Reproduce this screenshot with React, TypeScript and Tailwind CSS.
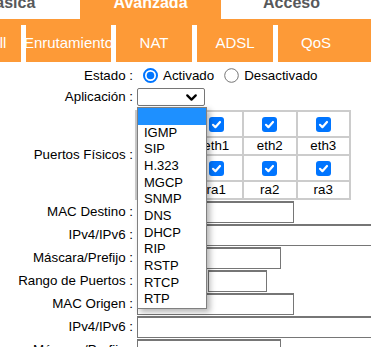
import React from 'react';
import { ChevronDown } from 'lucide-react';

const topTabs = [
  { title: 'Básica', active: false },
  { title: 'Avanzada', active: true },
  { title: 'Acceso', active: false },
];

const subTabs = [
  { title: 'Firewall', width: 'w-[81px]' },
  { title: 'Enrutamiento', width: 'w-[90px]' },
  { title: 'NAT', width: 'w-[81px]' },
  { title: 'ADSL', width: 'w-[81px]' },
  { title: 'QoS', width: 'w-[81px]' },
];

const apps = ['', 'IGMP', 'SIP', 'H.323', 'MGCP', 'SNMP', 'DNS', 'DHCP', 'RIP', 'RSTP', 'RTCP', 'RTP'];

const Radio: React.FC<{ checked?: boolean }> = ({ checked }) => (
  <svg width="15" height="15" viewBox="0 0 15 15" className="shrink-0">
    {checked ? (
      <>
        <circle cx="7.5" cy="7.5" r="6.5" fill="white" stroke="#0075ff" strokeWidth="2" />
        <circle cx="7.5" cy="7.5" r="3.8" fill="#0075ff" />
      </>
    ) : (
      <circle cx="7.5" cy="7.5" r="6.8" fill="white" stroke="#767676" strokeWidth="1" />
    )}
  </svg>
);

const Check: React.FC = () => (
  <div className="flex h-[15px] w-[15px] items-center justify-center rounded-[3px] bg-[#0075ff]">
    <svg width="11" height="11" viewBox="0 0 11 11">
      <path d="M2 5.8 L4.4 8.2 L9 3" fill="none" stroke="white" strokeWidth="2.2" strokeLinecap="round" strokeLinejoin="round" />
    </svg>
  </div>
);

const Label: React.FC<{ text: string }> = ({ text }) => (
  <div className="w-[133px] shrink-0 text-right">{text}</div>
);

const Field: React.FC<{ w: string }> = ({ w }) => (
  <div className={`h-[22px] ${w} shrink-0 border border-t-2 border-[#767676] bg-white`} />
);

export default function App() {
  return (
    <div
      className="h-[347px] w-[371px] overflow-hidden bg-white text-[13.33px] text-black"
      style={{ fontFamily: '"Liberation Sans", Arial, sans-serif' }}
    >
      {/* top tabs */}
      <div className="-ml-[61px] -mt-[6px] flex h-[25px]">
        {topTabs.map((t) => (
          <div
            key={t.title}
            className={
              t.active
                ? 'w-[141px] shrink-0 bg-[#fd9a37] text-center text-[16px] font-bold leading-[18px] text-white'
                : 'w-[141px] shrink-0 text-center text-[16px] font-bold leading-[18px] text-[#58595b]'
            }
          >
            {t.title}
          </div>
        ))}
      </div>

      {/* sub tabs */}
      <div className="h-[43px] bg-[#fd9a37] pt-[6px]">
        <div className="-ml-[60px] flex h-[37px]">
          {subTabs.map((s, i) => (
            <div
              key={s.title}
              className={`${s.width} flex shrink-0 items-center justify-center text-[15px] text-white ${i > 0 ? 'border-l-[5px] border-white' : ''}`}
            >
              {s.title}
            </div>
          ))}
        </div>
      </div>

      {/* form */}
      <div className="flex flex-col pt-[2px]">
        <div className="flex h-[24px] items-center">
          <Label text="Estado :" />
          <div className="ml-[10px] flex items-center">
            <Radio checked />
            <span className="ml-[5px]">Activado</span>
            <span className="ml-[10px]">
              <Radio />
            </span>
            <span className="ml-[5px]">Desactivado</span>
          </div>
        </div>

        <div className="flex h-[22px] items-start">
          <div className="w-[133px] shrink-0 text-right leading-[18px]">Aplicación :</div>
          <div className="relative z-10 ml-[4px]">
            <div className="flex h-[18px] w-[68px] items-center justify-end rounded-[2px] border border-[#767676] bg-white pr-[4px]">
              <ChevronDown size={17} strokeWidth={3.2} className="text-black" />
            </div>
            <div className="absolute left-0 top-[19px] w-[70px] border border-[#808080] bg-white py-0 shadow-[3px_3px_6px_rgba(0,0,0,0.3)]">
              {apps.map((a, i) => (
                <div
                  key={i}
                  className={`h-[16.67px] pl-[6px] text-[13px] leading-[16.67px] ${i === 0 ? 'bg-[#1e90ff]' : ''}`}
                >
                  {a}
                </div>
              ))}
            </div>
          </div>
        </div>

        <div className="flex items-center">
          <Label text="Puertos Físicos :" />
          <div className="ml-[2px] grid w-[216px] grid-cols-[repeat(4,51.5px)] grid-rows-[24px_16px_24px_16px] gap-[2px] bg-[#cccccc] p-[2px] leading-none">
            {[0, 1, 2, 3].map((n) => (
              <div key={'c' + n} className="flex items-center justify-center bg-white">
                <Check />
              </div>
            ))}
            {[0, 1, 2, 3].map((n) => (
              <div key={'e' + n} className="flex items-center justify-center bg-white">
                eth{n}
              </div>
            ))}
            {[0, 1, 2, 3].map((n) => (
              <div key={'d' + n} className="flex items-center justify-center bg-white">
                <Check />
              </div>
            ))}
            {[0, 1, 2, 3].map((n) => (
              <div key={'r' + n} className="flex items-center justify-center bg-white">
                ra{n}
              </div>
            ))}
          </div>
        </div>

        <div className="flex h-[23px] items-center">
          <Label text="MAC Destino :" />
          <div className="ml-[4px] flex">
            <Field w="w-[157px]" />
          </div>
        </div>
        <div className="flex h-[23px] items-center">
          <Label text="IPv4/IPv6 :" />
          <div className="ml-[4px] flex">
            <Field w="w-[240px]" />
          </div>
        </div>
        <div className="flex h-[23px] items-center">
          <Label text="Máscara/Prefijo :" />
          <div className="ml-[4px] flex">
            <Field w="w-[144px]" />
          </div>
        </div>
        <div className="flex h-[23px] items-center">
          <Label text="Rango de Puertos :" />
          <div className="ml-[4px] flex gap-[3px]">
            <Field w="w-[68px]" />
            <Field w="w-[59px]" />
          </div>
        </div>
        <div className="flex h-[23px] items-center">
          <Label text="MAC Origen :" />
          <div className="ml-[4px] flex">
            <Field w="w-[157px]" />
          </div>
        </div>
        <div className="flex h-[23px] items-center">
          <Label text="IPv4/IPv6 :" />
          <div className="ml-[4px] flex">
            <Field w="w-[240px]" />
          </div>
        </div>
        <div className="flex h-[23px] items-center">
          <Label text="Máscara/Prefijo :" />
          <div className="ml-[4px] flex">
            <Field w="w-[144px]" />
          </div>
        </div>
      </div>
    </div>
  );
}
